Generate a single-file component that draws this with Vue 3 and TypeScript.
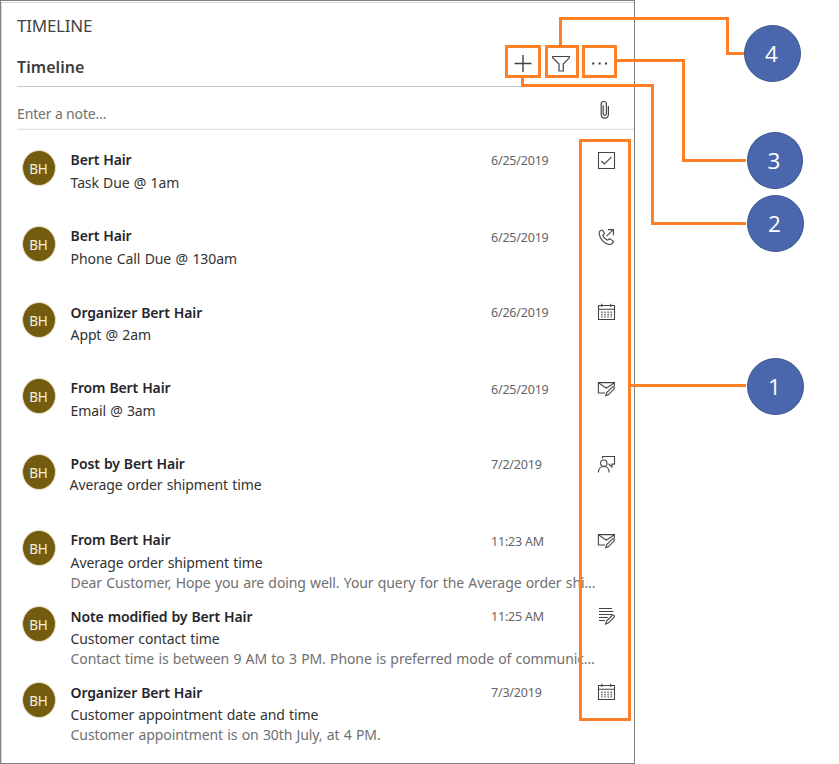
<script setup lang="ts">
type IconName = 'task' | 'phone' | 'calendar' | 'mail' | 'post' | 'note'

interface Activity {
  title: string
  subject: string
  snippet?: string
  date: string
  icon: IconName
  low?: boolean
}

const activities: Activity[] = [
  { title: 'Bert Hair', subject: 'Task Due @ 1am', date: '6/25/2019', icon: 'task' },
  { title: 'Bert Hair', subject: 'Phone Call Due @ 130am', date: '6/25/2019', icon: 'phone' },
  { title: 'Organizer Bert Hair', subject: 'Appt @ 2am', date: '6/26/2019', icon: 'calendar', low: true },
  { title: 'From Bert Hair', subject: 'Email @ 3am', date: '6/25/2019', icon: 'mail' },
  { title: 'Post by Bert Hair', subject: 'Average order shipment time', date: '7/2/2019', icon: 'post' },
  {
    title: 'From Bert Hair',
    subject: 'Average order shipment time',
    snippet: 'Dear Customer, Hope you are doing well. Your query for the Average order shi...',
    date: '11:23 AM',
    icon: 'mail',
  },
  {
    title: 'Note modified by Bert Hair',
    subject: 'Customer contact time',
    snippet: 'Contact time is between 9 AM to 3 PM. Phone is preferred mode of communic...',
    date: '11:25 AM',
    icon: 'note',
    low: true,
  },
  {
    title: 'Organizer Bert Hair',
    subject: 'Customer appointment date and time',
    snippet: 'Customer appointment is on 30th July, at 4 PM.',
    date: '7/3/2019',
    icon: 'calendar',
    low: true,
  },
]

const badges = [
  { n: 4, cls: 'b4' },
  { n: 3, cls: 'b3' },
  { n: 2, cls: 'b2' },
  { n: 1, cls: 'b1' },
]
</script>

<template>
  <div class="page">
    <section class="panel">
      <h1 class="section-title">TIMELINE</h1>
      <header class="bar">
        <h2 class="bar-title">Timeline</h2>
        <div class="tools">
          <button class="tool" aria-label="Add">
            <svg width="20" height="20" viewBox="0 0 20 20"><path d="M1.5 10.5H18.5M10 2V19" stroke-width="1.4" /></svg>
          </button>
          <button class="tool filter" aria-label="Filter">
            <svg width="20" height="20" viewBox="0 0 20 20">
              <path d="M1.7 3.5H18.3V4.8L12.3 11V18H8V11L1.7 4.8Z" stroke-width="1.2" />
            </svg>
          </button>
          <button class="tool more" aria-label="More">
            <svg width="20" height="20" viewBox="0 0 20 20">
              <path d="M2.2 9.6h2v2h-2zM8.6 9.6h2v2h-2zM15 9.6h2v2h-2z" class="solid" />
            </svg>
          </button>
        </div>
      </header>
      <div class="note-entry">
        <span class="placeholder">Enter a note...</span>
        <svg class="clip" width="12" height="20" viewBox="0 0 12 20">
          <path d="M4.2 5.2V13.6C4.2 16 7.4 16 7.4 13.6V4.2C7.4 .6 2.2 .6 2.2 4.2V14C2.2 19.6 9.4 19.6 9.4 14V6" stroke-width="1.2" />
        </svg>
      </div>
      <ul class="list">
        <li v-for="(a, i) in activities" :key="i" class="row" :class="[a.icon, { low: a.low }]">
          <span class="avatar"><span>BH</span></span>
          <div class="body">
            <div class="name">{{ a.title }}</div>
            <div class="subject">{{ a.subject }}</div>
            <div v-if="a.snippet" class="snippet">{{ a.snippet }}</div>
          </div>
          <time class="date">{{ a.date }}</time>
          <svg class="icon" width="20" height="20" viewBox="0 0 20 20">
            <path v-if="a.icon === 'task'" d="M2.5 2.5H18.5V18.5H2.5ZM5.2 11L8.4 14L15.4 7.2" />
            <g v-else-if="a.icon === 'phone'">
              <path d="M6.4 3C4.4 3.2 3 4.8 3.2 7C3.8 11.8 8.4 16.8 13 17.4C15.2 17.6 17 16.4 17.5 14.4L13.7 11.6L11.8 13.2C9.8 12.6 7.4 10.2 6.8 8.2L8.6 6.4Z" />
              <path d="M10.6 9.2L17 2.8M11.8 2.6H17.4V8.2" />
            </g>
            <g v-else-if="a.icon === 'calendar'">
              <path d="M2.5 3.5H18.5V17.5H2.5ZM2.5 7.3H18.5M5.8 1.8V5M14.8 1.8V5" />
              <path d="M5.9 9.4V15.5M9 9.4V15.5M12.1 9.4V15.5M15.2 9.4V15.5" stroke-dasharray="1.6 .8" stroke-width="1.2" />
            </g>
            <g v-else-if="a.icon === 'mail'">
              <path d="M9 14H2.4V3.6H18.4V7.2M2.4 3.9L10.4 9L18.4 3.9" />
              <path d="M9.7 16.8L10.7 13.6L16.4 7.9C17.8 7.2 19 8.5 18.1 9.8L12.6 15.6Z" />
            </g>
            <g v-else-if="a.icon === 'post'">
              <circle cx="7.8" cy="9.2" r="3.2" />
              <path d="M2.4 18.4C2.6 10.6 13 10.6 13.1 18.4M6.5 4.5V2.5H18.5V10.1H15.9V12.9L12.8 10.1H12.4" />
            </g>
            <g v-else>
              <path d="M3 2.5H15.9M3 5.5H17.4M3 8.5H16.4M3 11.5H11.9M3 14.5H9" />
              <path d="M9.6 18L10.5 15L16.3 9.3C17.7 8.5 18.9 9.8 18.1 11.1L12.5 16.8Z" />
            </g>
          </svg>
        </li>
      </ul>
    </section>

    <svg class="callouts" width="839" height="764" viewBox="0 0 839 764">
      <rect x="506.5" y="46.5" width="33" height="30" />
      <rect x="546.5" y="46.5" width="31" height="30" />
      <rect x="583.5" y="46.5" width="32" height="30" />
      <rect x="580.5" y="140.5" width="49" height="579" />
      <path d="M560.5 46V18.5H727.5V53.5H746M617 60.5H683.5V160.5H746M522.5 77V85.5H652.5V223.5H746M631 385.5H746" />
    </svg>
    <div v-for="b in badges" :key="b.n" class="badge" :class="b.cls">{{ b.n }}</div>
  </div>
</template>

<style>
body {
  background: #fff;
}
</style>

<style scoped>
.page {
  position: relative;
  width: 839px;
  height: 764px;
  overflow: hidden;
  font-family: 'Noto Sans', 'Open Sans', sans-serif;
  color: #333;
}
.panel {
  box-sizing: border-box;
  width: 635px;
  height: 764px;
  border: 1px solid #7f7f7f;
  padding-left: 16px;
  box-shadow: inset 0 1px #fff, inset 0 2px #d4d4d4, inset 1px 0 #ddd;
}
svg {
  display: block;
  fill: none;
  stroke: #444;
  stroke-width: 1.1;
}
.solid {
  fill: #333;
  stroke: none;
}
.section-title {
  margin: 0;
  padding-top: 13px;
  height: 23px;
  line-height: 24px;
  font-size: 17px;
  font-weight: 400;
  letter-spacing: -0.25px;
  color: #444;
}
.bar {
  box-sizing: border-box;
  height: 50px;
  display: flex;
  justify-content: space-between;
  border-bottom: 1px solid #c8c8c8;
}
.bar-title {
  margin: 18px 0 0;
  height: 24px;
  line-height: 24px;
  font-size: 16px;
  font-weight: 600;
  letter-spacing: 0.05px;
  color: #3c3c3c;
}
.tools {
  display: flex;
  padding: 16px 15px 0 0;
}
.tool {
  width: 38.5px;
  height: 20px;
  padding: 0;
  border: 0;
  background: none;
  display: flex;
  justify-content: center;
}
.note-entry {
  box-sizing: border-box;
  height: 43px;
  display: flex;
  justify-content: space-between;
  padding: 13px 23px 0 0;
  border-bottom: 1px solid #e4e4e4;
  box-shadow: inset 0 -1px #f4f4f4;
}
.placeholder {
  height: 26px;
  line-height: 28px;
  font-size: 14px;
  letter-spacing: -0.15px;
  color: #707070;
}
.list {
  margin: 0;
  padding: 0;
  list-style: none;
}
.row {
  height: 76px;
  display: grid;
  grid-template-columns: 53.6px 420.4px 89px 20px;
  align-items: start;
}
.avatar {
  box-sizing: border-box;
  margin: 20px 0 0 4.5px;
  width: 34px;
  height: 36px;
  border: 1px solid #e6e0cc;
  border-radius: 50%;
  background: #735c0f;
  color: #f5f0e0;
  font-size: 13.5px;
  line-height: 36px;
  letter-spacing: -0.2px;
  text-align: center;
}
.body {
  padding-top: 20px;
  white-space: nowrap;
  font-size: 14px;
}
.name {
  box-sizing: border-box;
  height: 23px;
  line-height: 20px;
  font-weight: 600;
  letter-spacing: -0.15px;
  word-spacing: 0.6px;
  color: #25252b;
}
.low .name {
  padding-top: 1px;
}
.subject {
  height: 20px;
  line-height: 20px;
  letter-spacing: -0.13px;
  word-spacing: 0.8px;
  color: #333;
}
.phone .subject {
  letter-spacing: -0.08px;
}
.post .subject {
  margin: -2px 0 0 -1px;
}
.snippet {
  height: 20px;
  line-height: 20px;
  letter-spacing: -0.1px;
  word-spacing: 0.75px;
  color: #707070;
}
.date {
  padding-top: 21px;
  line-height: 20px;
  font-size: 12.5px;
  letter-spacing: -0.2px;
  color: #666;
}
.phone .date,
.mail .date {
  padding-top: 22px;
}
.icon {
  margin: 20px 0 0 16px;
}
.phone .icon,
.mail .icon {
  margin-top: 21px;
}
.callouts {
  position: absolute;
  inset: 0;
  stroke: #ff7f27;
  stroke-width: 3;
}
.badge {
  position: absolute;
  box-sizing: border-box;
  width: 57px;
  height: 57px;
  border: 1px solid #3c5590;
  border-radius: 50%;
  background: #4a67ad;
  color: #fff;
  font-family: 'Open Sans', 'Noto Sans', sans-serif;
  font-weight: 400;
  font-size: 22.5px;
  line-height: 55px;
  padding-right: 2px;
  text-align: center;
}
.b4 {
  left: 744px;
  top: 25px;
}
.b3 {
  left: 747px;
  top: 132px;
  width: 56px;
}
.b2 {
  left: 747px;
  top: 195px;
}
.b1 {
  left: 747px;
  top: 358px;
}
</style>
